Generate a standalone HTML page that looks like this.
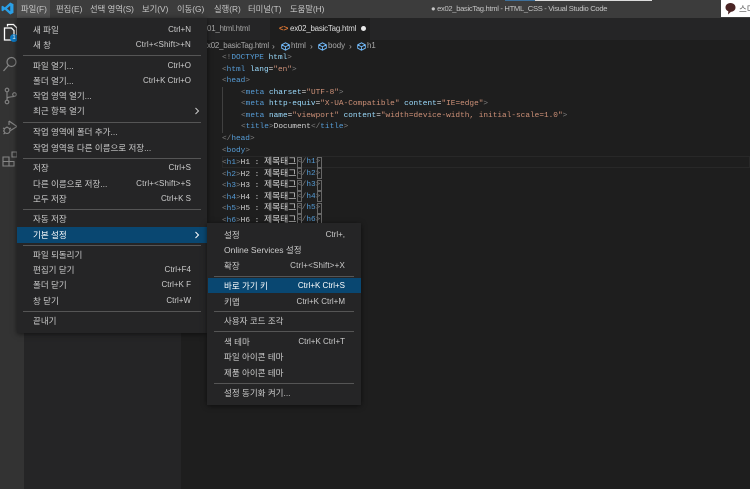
<!DOCTYPE html>
<html lang="ko"><head><meta charset="utf-8"><style>
html,body{margin:0;padding:0;width:750px;height:489px;overflow:hidden;background:#1e1e1e}
body{position:relative;font-family:"Liberation Sans","Noto Sans CJK KR",sans-serif;font-size:8.5px;color:#ccc}
.a{position:absolute}
.t{position:absolute;white-space:pre;line-height:12px;height:12px}
.m{color:#c8c8c8;font-size:8.3px;top:3px}
.menu{position:absolute;background:#252526;box-shadow:0 1px 5px rgba(0,0,0,.55)}
.sep{position:absolute;height:1px;background:#555}
.l{position:absolute;left:0;white-space:pre;line-height:12px;height:12px;color:#ccc}
.r{position:absolute;white-space:pre;line-height:12px;height:12px;color:#ccc;text-align:right;font-size:8px}
.w{letter-spacing:.17px}
.c{position:absolute;white-space:pre;font-family:"Liberation Mono","Noto Sans CJK KR",monospace;font-size:7.77px;line-height:12px;height:12px;color:#d4d4d4;font-weight:normal}
.g{color:#808080}.b{color:#569cd6}.v{color:#9cdcfe}.s{color:#ce9178}
.h{font-size:8.8px}
.box{position:absolute;border:1px solid #666;box-sizing:border-box;width:5px;height:11px}
.n{font-size:7.9px;letter-spacing:-.2px}
</style></head><body>
<!-- base regions -->
<div class="a" style="left:0;top:0;width:750px;height:18px;background:#3c3c3c"></div>
<div class="a" style="left:0;top:18px;width:24px;height:471px;background:#333"></div>
<div class="a" style="left:24px;top:18px;width:157px;height:471px;background:#252526"></div>
<div class="a" style="left:181px;top:18px;width:569px;height:22px;background:#252526"></div>
<div class="a" style="left:270px;top:18px;width:100px;height:22px;background:#1e1e1e"></div>
<div class="a" style="left:505px;top:0;width:30px;height:1px;background:#3d6f9a"></div>
<div class="a" style="left:535px;top:0;width:117px;height:1px;background:#ddd"></div>

<!-- title bar -->
<svg class="a" style="left:1px;top:2px" width="13" height="13" viewBox="0 0 24 24"><path d="M17 1l6 3v16l-6 3L7 14l-4 3-2-1V8l2-1 4 3zM17 7l-6 5 6 5z" fill="#2a9fe6" fill-rule="evenodd"/></svg>
<div class="a" style="left:17px;top:0;width:33px;height:18px;background:#505050"></div>
<div class="t m" style="left:21px">파일(F)</div>
<div class="t m" style="left:56px">편집(E)</div>
<div class="t m" style="left:90px">선택 영역(S)</div>
<div class="t m" style="left:142px">보기(V)</div>
<div class="t m" style="left:177px">이동(G)</div>
<div class="t m" style="left:214px">실행(R)</div>
<div class="t m" style="left:248px">터미널(T)</div>
<div class="t m" style="left:290px">도움말(H)</div>
<div class="t" style="left:431px;top:3px;font-size:7.6px;letter-spacing:-.31px;color:#c4c4c4">● ex02_basicTag.html - HTML_CSS - Visual Studio Code</div>
<div class="a" style="left:721px;top:0;width:29px;height:17px;background:#fff"></div>
<svg class="a" style="left:725px;top:2px" width="11" height="13" viewBox="0 0 11 13"><path d="M5.5 1C8.3 1 10.5 2.800 10.500 5.500 10.500 8 8.500 9.700 6 9.800L3 12.500 3.300 9.300C1.500 8.600 .5 7.200 .5 5.500 .5 2.800 2.700 1 5.500 1z" fill="#4a2424"/></svg>
<div class="t" style="left:739px;top:3px;font-size:8.500px;color:#555">스마</div>

<!-- activity icons -->
<svg class="a" style="left:2px;top:23px" width="18" height="20" viewBox="0 0 18 20" fill="none" stroke="#fff" stroke-width="1.300"><path d="M5.500 3.500V1.500H11.500L15 5V14H12"/><path d="M2.500 5H9.500L12 7.500V17H2.500z" fill="#333"/></svg>
<div class="a" style="left:10px;top:34px;width:8px;height:8px;border-radius:50%;background:#0e7ac4;color:#fff;font-size:6px;line-height:8px;text-align:center">1</div>
<svg class="a" style="left:2px;top:56px" width="16" height="17" viewBox="0 0 16 17" fill="none" stroke="#858585" stroke-width="1.200"><circle cx="9.500" cy="6" r="4.500"/><path d="M6.300 9.500L1.500 15"/></svg>
<svg class="a" style="left:3px;top:87px" width="14" height="18" viewBox="0 0 14 18" fill="none" stroke="#858585" stroke-width="1.100"><circle cx="4" cy="3" r="1.800"/><circle cx="4" cy="15" r="1.800"/><circle cx="11.500" cy="7.500" r="1.800"/><path d="M4 5v8M4 12C4 9 10 10.500 11 9.200"/></svg>
<svg class="a" style="left:2px;top:119px" width="16" height="17" viewBox="0 0 16 17" fill="none" stroke="#858585" stroke-width="1.100"><path d="M7 2L15 7.500 8.500 11.500"/><path d="M7 2V6"/><circle cx="5" cy="11.500" r="3"/><path d="M1 9l2 1M1 12h1M1.500 15L3 14M9 9L7 10M5 7.500V9"/></svg>
<svg class="a" style="left:2px;top:151px" width="15" height="16" viewBox="0 0 15 16" fill="none" stroke="#858585" stroke-width="1.100"><path d="M1 6H7V15H1zM1 10.500H12V15H7"/><path d="M10 1H15V6H10z"/></svg>

<!-- tabs + breadcrumb -->
<div class="t n" style="left:207px;top:23px;color:#a5a5a5">01_html.html</div>
<div class="t" style="left:279px;top:23px;font-size:8px;color:#e37933;font-weight:bold">&lt;&gt;</div>
<div class="t n" style="left:290px;top:23px;color:#ddd">ex02_basicTag.html</div>
<div class="a" style="left:361px;top:26px;width:5px;height:5px;border-radius:50%;background:#e8e8e8"></div>
<div class="t n" style="left:207px;top:40px;color:#a8a8a8">x02_basicTag.html</div>
<div class="t" style="left:272px;top:40px;font-size:8.500px;color:#a8a8a8">›</div>
<svg class="a" style="left:281px;top:42px" width="9" height="9" viewBox="0 0 9 9" fill="none" stroke="#75beff" stroke-width=".9"><path d="M4.500 .8L8.300 2.800V6.200L4.500 8.200 .7 6.200V2.800zM.7 2.800L4.500 4.800 8.300 2.800M4.500 4.800V8.200"/></svg>
<div class="t" style="left:291px;top:40px;font-size:7.9px;color:#a8a8a8">html</div>
<div class="t" style="left:310px;top:40px;font-size:8.500px;color:#a8a8a8">›</div>
<svg class="a" style="left:318px;top:42px" width="9" height="9" viewBox="0 0 9 9" fill="none" stroke="#75beff" stroke-width=".9"><path d="M4.500 .8L8.300 2.800V6.200L4.500 8.200 .7 6.200V2.800zM.7 2.800L4.500 4.800 8.300 2.800M4.500 4.800V8.200"/></svg>
<div class="t" style="left:328px;top:40px;font-size:7.9px;color:#a8a8a8">body</div>
<div class="t" style="left:349px;top:40px;font-size:8.500px;color:#a8a8a8">›</div>
<svg class="a" style="left:357px;top:42px" width="9" height="9" viewBox="0 0 9 9" fill="none" stroke="#75beff" stroke-width=".9"><path d="M4.500 .8L8.300 2.800V6.200L4.500 8.200 .7 6.200V2.800zM.7 2.800L4.500 4.800 8.300 2.800M4.500 4.800V8.200"/></svg>
<div class="t" style="left:367px;top:40px;font-size:7.9px;color:#a8a8a8">h1</div>

<!-- code -->
<div class="a" style="left:222px;top:87px;width:1px;height:46px;background:#404040"></div>
<div class="a" style="left:222px;top:156px;width:528px;height:12px;box-sizing:border-box;border:1px solid #282828"></div>
<div class="c" style="left:222px;top:52px"><span class="g">&lt;!</span><span class="b">DOCTYPE</span> <span class="v">html</span><span class="g">&gt;</span></div>
<div class="c" style="left:222px;top:64px"><span class="g">&lt;</span><span class="b">html</span> <span class="v">lang</span>=<span class="s">"en"</span><span class="g">&gt;</span></div>
<div class="c" style="left:222px;top:75px"><span class="g">&lt;</span><span class="b">head</span><span class="g">&gt;</span></div>
<div class="c" style="left:241px;top:87px"><span class="g">&lt;</span><span class="b">meta</span> <span class="v">charset</span>=<span class="s">"UTF-8"</span><span class="g">&gt;</span></div>
<div class="c" style="left:241px;top:98px"><span class="g">&lt;</span><span class="b">meta</span> <span class="v">http-equiv</span>=<span class="s">"X-UA-Compatible"</span> <span class="v">content</span>=<span class="s">"IE=edge"</span><span class="g">&gt;</span></div>
<div class="c" style="left:241px;top:110px"><span class="g">&lt;</span><span class="b">meta</span> <span class="v">name</span>=<span class="s">"viewport"</span> <span class="v">content</span>=<span class="s">"width=device-width, initial-scale=1.0"</span><span class="g">&gt;</span></div>
<div class="c" style="left:241px;top:121px"><span class="g">&lt;</span><span class="b">title</span><span class="g">&gt;</span>Document<span class="g">&lt;/</span><span class="b">title</span><span class="g">&gt;</span></div>
<div class="c" style="left:222px;top:133px"><span class="g">&lt;/</span><span class="b">head</span><span class="g">&gt;</span></div>
<div class="c" style="left:222px;top:145px"><span class="g">&lt;</span><span class="b">body</span><span class="g">&gt;</span></div>
<div class="c" style="left:222px;top:156px"><span class="g">&lt;</span><span class="b">h1</span><span class="g">&gt;</span>H1 : <span class="h">제목태그</span></div><div class="c" style="left:297px;top:156px"><span class="g">&lt;/</span><span class="b">h1</span><span class="g">&gt;</span></div>
<div class="c" style="left:222px;top:168px"><span class="g">&lt;</span><span class="b">h2</span><span class="g">&gt;</span>H2 : <span class="h">제목태그</span></div><div class="c" style="left:297px;top:168px"><span class="g">&lt;/</span><span class="b">h2</span><span class="g">&gt;</span></div>
<div class="c" style="left:222px;top:179px"><span class="g">&lt;</span><span class="b">h3</span><span class="g">&gt;</span>H3 : <span class="h">제목태그</span></div><div class="c" style="left:297px;top:179px"><span class="g">&lt;/</span><span class="b">h3</span><span class="g">&gt;</span></div>
<div class="c" style="left:222px;top:191px"><span class="g">&lt;</span><span class="b">h4</span><span class="g">&gt;</span>H4 : <span class="h">제목태그</span></div><div class="c" style="left:297px;top:191px"><span class="g">&lt;/</span><span class="b">h4</span><span class="g">&gt;</span></div>
<div class="c" style="left:222px;top:202px"><span class="g">&lt;</span><span class="b">h5</span><span class="g">&gt;</span>H5 : <span class="h">제목태그</span></div><div class="c" style="left:297px;top:202px"><span class="g">&lt;/</span><span class="b">h5</span><span class="g">&gt;</span></div>
<div class="c" style="left:222px;top:214px"><span class="g">&lt;</span><span class="b">h6</span><span class="g">&gt;</span>H6 : <span class="h">제목태그</span></div><div class="c" style="left:297px;top:214px"><span class="g">&lt;/</span><span class="b">h6</span><span class="g">&gt;</span></div>
<div class="box" style="left:297px;top:157px"></div><div class="box" style="left:317px;top:157px"></div>
<div class="box" style="left:297px;top:168px"></div><div class="box" style="left:317px;top:168px"></div>
<div class="box" style="left:297px;top:180px"></div><div class="box" style="left:317px;top:180px"></div>
<div class="box" style="left:297px;top:191px"></div><div class="box" style="left:317px;top:191px"></div>
<div class="box" style="left:297px;top:203px"></div><div class="box" style="left:317px;top:203px"></div>
<div class="box" style="left:297px;top:214px"></div><div class="box" style="left:317px;top:214px"></div>

<!-- file menu -->
<div class="menu" style="left:17px;top:18px;width:190px;height:315px">
<div class="a" style="left:0;top:209px;width:190px;height:16px;background:#094771"></div>
<div class="sep" style="left:6px;width:178px;top:37px"></div>
<div class="sep" style="left:6px;width:178px;top:104px"></div>
<div class="sep" style="left:6px;width:178px;top:140px"></div>
<div class="sep" style="left:6px;width:178px;top:191px"></div>
<div class="sep" style="left:6px;width:178px;top:227px"></div>
<div class="sep" style="left:6px;width:178px;top:293px"></div>
<div class="l" style="left:16px;top:6px">새 파일</div><div class="r" style="right:16px;top:6px">Ctrl+N</div>
<div class="l" style="left:16px;top:21px">새 창</div><div class="r w" style="right:16px;top:21px">Ctrl+&lt;Shift&gt;+N</div>
<div class="l" style="left:16px;top:42px">파일 열기...</div><div class="r" style="right:16px;top:42px">Ctrl+O</div>
<div class="l" style="left:16px;top:57px">폴더 열기...</div><div class="r" style="right:16px;top:57px">Ctrl+K Ctrl+O</div>
<div class="l" style="left:16px;top:72px">작업 영역 열기...</div>
<div class="l" style="left:16px;top:87px">최근 항목 열기</div>
<svg class="a" style="left:177px;top:89px" width="6" height="8" viewBox="0 0 6 8" fill="none" stroke="#ccc"><path d="M1.500 1L4.500 4 1.500 7"/></svg>
<div class="l" style="left:16px;top:108px">작업 영역에 폴더 추가...</div>
<div class="l" style="left:16px;top:124px">작업 영역을 다른 이름으로 저장...</div>
<div class="l" style="left:16px;top:144px">저장</div><div class="r" style="right:16px;top:144px">Ctrl+S</div>
<div class="l" style="left:16px;top:160px">다른 이름으로 저장...</div><div class="r w" style="right:16px;top:160px">Ctrl+&lt;Shift&gt;+S</div>
<div class="l" style="left:16px;top:175px">모두 저장</div><div class="r" style="right:16px;top:175px">Ctrl+K S</div>
<div class="l" style="left:16px;top:195px">자동 저장</div>
<div class="l" style="left:16px;top:211px;color:#fff">기본 설정</div>
<svg class="a" style="left:177px;top:213px" width="6" height="8" viewBox="0 0 6 8" fill="none" stroke="#fff"><path d="M1.500 1L4.500 4 1.500 7"/></svg>
<div class="l" style="left:16px;top:231px">파일 되돌리기</div>
<div class="l" style="left:16px;top:246px">편집기 닫기</div><div class="r" style="right:16px;top:246px">Ctrl+F4</div>
<div class="l" style="left:16px;top:261px">폴더 닫기</div><div class="r" style="right:16px;top:261px">Ctrl+K F</div>
<div class="l" style="left:16px;top:277px">창 닫기</div><div class="r" style="right:16px;top:277px">Ctrl+W</div>
<div class="l" style="left:16px;top:297px">끝내기</div>
</div>

<!-- preferences submenu -->
<div class="menu" style="left:207px;top:223px;width:154px;height:182px">
<div class="a" style="left:1px;top:55px;width:153px;height:15px;background:#094771"></div>
<div class="sep" style="left:7px;width:140px;top:53px"></div>
<div class="sep" style="left:7px;width:140px;top:88px"></div>
<div class="sep" style="left:7px;width:140px;top:108px"></div>
<div class="sep" style="left:7px;width:140px;top:160px"></div>
<div class="l" style="left:17px;top:6px">설정</div><div class="r" style="right:16px;top:6px">Ctrl+,</div>
<div class="l" style="left:17px;top:21px">Online Services 설정</div>
<div class="l" style="left:17px;top:37px">확장</div><div class="r w" style="right:16px;top:37px">Ctrl+&lt;Shift&gt;+X</div>
<div class="l" style="left:17px;top:57px;color:#fff">바로 가기 키</div><div class="r" style="right:16px;top:57px;color:#fff">Ctrl+K Ctrl+S</div>
<div class="l" style="left:17px;top:73px">키맵</div><div class="r" style="right:16px;top:73px">Ctrl+K Ctrl+M</div>
<div class="l" style="left:17px;top:92px">사용자 코드 조각</div>
<div class="l" style="left:17px;top:113px">색 테마</div><div class="r" style="right:16px;top:113px">Ctrl+K Ctrl+T</div>
<div class="l" style="left:17px;top:128px">파일 아이콘 테마</div>
<div class="l" style="left:17px;top:144px">제품 아이콘 테마</div>
<div class="l" style="left:17px;top:164px">설정 동기화 켜기...</div>
</div>
</body></html>
